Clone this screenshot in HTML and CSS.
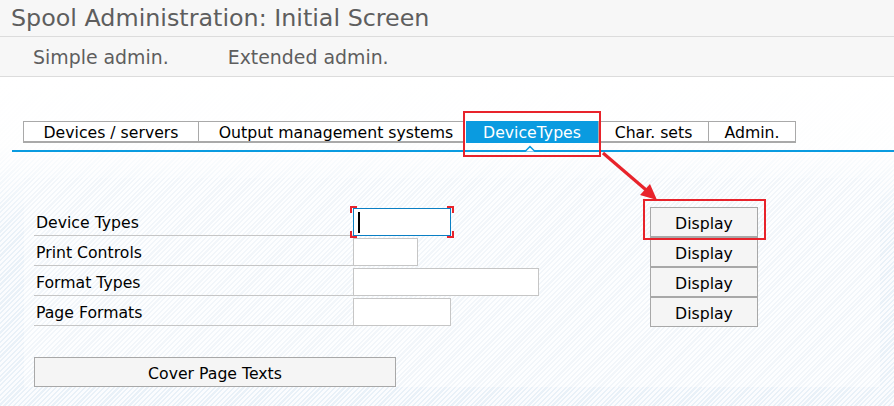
FILE: index.html
```html
<!DOCTYPE html>
<html>
<head>
<meta charset="utf-8">
<link rel="stylesheet" href="styles.css">
</head>
<body>
<header class="title">Spool Administration: Initial Screen</header>
<nav class="toolbar">
  <span class="tool">Simple admin.</span>
  <span class="tool">Extended admin.</span>
</nav>
<main class="content">
  <div class="tabs">
    <div class="tab tab-dev">Devices / servers</div>
    <div class="tab tab-oms">Output management systems</div>
    <div class="tab tab-active">DeviceTypes</div>
    <div class="tab tab-char">Char. sets</div>
    <div class="tab tab-admin">Admin.</div>
  </div>
  <div class="tabline"></div>
  <section class="panel">
    <div class="form">
      <div class="label">Device Types</div>
      <div class="field"><div class="input input-focus w97"><span class="caret"></span></div></div>
      <button class="btn">Display</button>

      <div class="label">Print Controls</div>
      <div class="field"><div class="input w65"></div></div>
      <button class="btn">Display</button>

      <div class="label">Format Types</div>
      <div class="field"><div class="input w186"></div></div>
      <button class="btn">Display</button>

      <div class="label">Page Formats</div>
      <div class="field"><div class="input w98"></div></div>
      <button class="btn">Display</button>
    </div>
    <button class="btn btn-wide">Cover Page Texts</button>
  </section>

  <svg class="notch" width="16" height="8" viewBox="0 0 16 8"><path d="M0 7.5 H3 L8 2.5 L13 7.5 H16" fill="#fff" stroke="#0a9be0" stroke-width="1.5"/></svg>
  <div class="mark mark-tab"></div>
  <div class="mark mark-btn"></div>
  <svg class="arrow" width="70" height="60" viewBox="0 0 70 60"><line x1="3" y1="3" x2="52" y2="45" stroke="#e8232b" stroke-width="3.2"/><path d="M57 50 L40 45 L50 34 Z" fill="#e8232b"/></svg>
  <div class="corners"><i class="c tl"></i><i class="c tr"></i><i class="c bl"></i><i class="c br"></i></div>
</main>
</body>
</html>
```

FILE: styles.css
```css
* { box-sizing: border-box; }
html, body { margin: 0; padding: 0; }
body {
  width: 894px;
  height: 406px;
  overflow: hidden;
  font-family: "DejaVu Sans", Verdana, sans-serif;
  background: #fff;
}
.title {
  height: 37px;
  padding: 3px 0 0 11px;
  font-size: 23.8px;
  line-height: 30px;
  color: #5e5e5e;
  background: #f7f7f7;
  border-bottom: 1px solid #dcdcdc;
}
.toolbar {
  height: 40px;
  display: flex;
  align-items: center;
  gap: 59px;
  padding: 1px 0 0 33px;
  font-size: 18.9px;
  color: #5e5e5e;
  background: #f7f7f7;
  border-bottom: 1px solid #dcdcdc;
}
.content {
  position: relative;
  height: 329px;
  padding-top: 44px;
  background:
    linear-gradient(180deg, #fff 0px, rgba(255,255,255,0.9) 70px, rgba(255,255,255,0.2) 130px, rgba(255,255,255,0) 160px),
    repeating-linear-gradient(135deg, #e9f1f8 0 1.6px, #fbfcfe 1.6px 3.4px);
}
.tabs {
  display: flex;
  margin-left: 23px;
  height: 22px;
  font-size: 15.7px;
  color: #000;
}
.tab {
  height: 22px;
  border: 1px solid #a9a9a9;
  border-bottom-width: 2px;
  border-left: none;
  background: #fff;
  text-align: center;
  line-height: 21px;
}
.tab-dev { width: 176px; border-left: 1px solid #a9a9a9; }
.tab-oms { width: 265px; padding-left: 10px; }
.tab-active {
  width: 132px;
  margin-left: 2px;
  border: none;
  background: #0a9be0;
  color: #fff;
  line-height: 23px;
}
.tab-char { width: 111px; border-left: 1px solid #a9a9a9; }
.tab-admin { width: 87px; }
.tabline {
  margin: 7px 0 0 12px;
  height: 2px;
  background: #0a9be0;
}
.panel {
  margin: 26px 14px 0 24px;
  height: 209px;
  padding: 28px 0 0 10px;
  background: repeating-linear-gradient(135deg, #f2f6fa 0 1.6px, #fdfeff 1.6px 3.4px);
}
.form {
  display: grid;
  grid-template-columns: 319px 297px 108px;
  grid-auto-rows: 30px;
}
.label {
  border-bottom: 1px solid #c6c6c6;
  padding: 6px 0 0 2px;
  font-size: 15.7px;
  line-height: 22px;
  color: #000;
}
.field { padding-top: 2px; }
.input {
  height: 28px;
  background: #fff;
  border: 1px solid #c6c6c6;
  position: relative;
}
.w97 { width: 98px; }
.w65 { width: 65px; }
.w186 { width: 186px; }
.w98 { width: 98px; }
.input-focus { border: 1px solid #0a7fc4; }
.caret {
  position: absolute;
  left: 4px;
  top: 3px;
  width: 1.5px;
  height: 21px;
  background: #000;
}
.btn {
  margin-top: 1px;
  height: 30px;
  border: 1px solid #a8a8a8;
  background: #f5f5f5;
  font-family: inherit;
  font-size: 15.7px;
  color: #000;
  padding: 2px 0 0;
}
.btn-wide {
  margin-top: 31px;
  width: 362px;
}
.notch {
  position: absolute;
  left: 522px;
  top: 67px;
}
.mark {
  position: absolute;
  border: 2px solid #e8232b;
}
.mark-tab { left: 463px; top: 34px; width: 138px; height: 46px; }
.mark-btn { left: 643px; top: 122px; width: 123px; height: 41px; }
.arrow {
  position: absolute;
  left: 600px;
  top: 73px;
}
.corners {
  position: absolute;
  left: 350px;
  top: 129px;
  width: 104px;
  height: 32px;
}
.c { position: absolute; width: 7px; height: 7px; border: 0 solid #e8232b; }
.tl { left: 0; top: 0; border-left-width: 2px; border-top-width: 2px; }
.tr { right: 0; top: 0; border-right-width: 2px; border-top-width: 2px; }
.bl { left: 0; bottom: 0; border-left-width: 2px; border-bottom-width: 2px; }
.br { right: 0; bottom: 0; border-right-width: 2px; border-bottom-width: 2px; }
```
